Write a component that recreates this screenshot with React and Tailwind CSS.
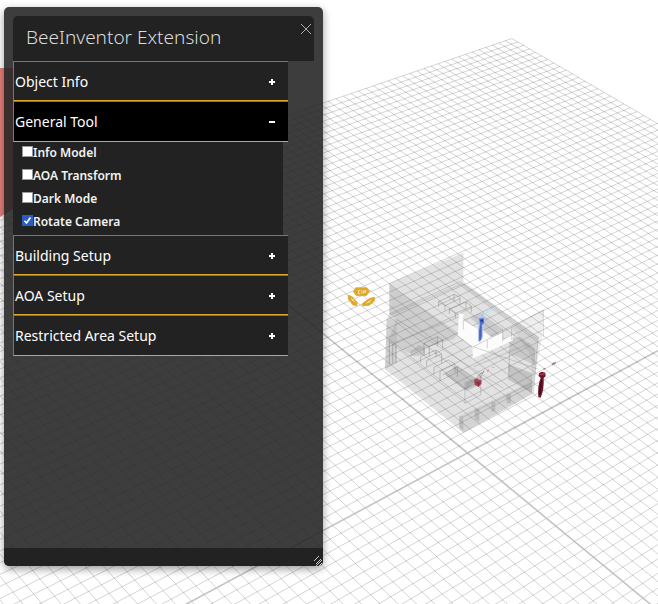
import { useState } from "react";

const CELLS = 50;
const U = { k: 0.23746, x: 2515, y: -647 };
const V = { k: 0.23254, x: -1343, y: -1044 };
const ORIGIN = { x: 467.5, y: 453 };

// Perspective projection of a ground point, u and v in -1..1
function project(u, v) {
  const a = u * U.k;
  const b = v * V.k;
  const w = 1 + a + b;
  return [
    ((ORIGIN.x + a * U.x + b * V.x) / w).toFixed(2),
    ((ORIGIN.y + a * U.y + b * V.y) / w).toFixed(2),
  ];
}

function segment(u1, v1, u2, v2) {
  return `M${project(u1, v1).join(" ")}L${project(u2, v2).join(" ")}`;
}

function Ground() {
  const lines = [];
  for (let i = -CELLS; i <= CELLS; i += 1) {
    const t = i / CELLS;
    const axis = i === 0;
    const style = { stroke: axis ? "#b8b8b8" : "#000", strokeOpacity: axis ? 0.85 : 0.17, strokeWidth: axis ? 1.6 : 1 };
    lines.push(<path key={`u${i}`} d={segment(t, -1, t, 1)} {...style} />);
    lines.push(<path key={`v${i}`} d={segment(-1, t, 1, t)} {...style} />);
  }
  return <g fill="none">{lines}</g>;
}

function Building() {
  return (
    <g transform="translate(330 240) scale(0.33333)">
      <g fill="#555">
        <path fillOpacity=".17" d="M178 130L400 38V125L625 292L608 462L400 578L165 388L170 238L178 222Z" />
        <path fillOpacity=".15" d="M178 132L385 280L370 298L322 312L200 240L178 222Z" />
        <path fillOpacity=".14" d="M200 238L322 312L240 340L172 305Z" />
        <path fillOpacity=".12" d="M170 238L200 238V370L165 388Z" />
        <path fillOpacity=".1" d="M545 262L640 210L636 290L605 462V350Z" />
        <path fillOpacity=".18" d="M538 296L570 290L615 325V375L538 340Z" />
        <path fillOpacity=".22" d="M534 372L606 400V460L534 418Z" />
        <path fillOpacity=".1" d="M388 528L605 424V462L400 578L388 568Z" />
        <path fillOpacity=".17" d="M420 232L450 218L520 268L485 292Z" />
        <path fillOpacity=".2" d="M345 402L380 378L440 420L405 450Z" />
        <path fillOpacity=".24" d="M408 426L455 405V432L408 452Z" />
        <path fillOpacity=".18" d="M240 335L268 315L285 325V345L242 349Z" />
      </g>
      <path fill="#fff" fillOpacity=".9" d="M386 220L400 222V240L485 292L518 278V300L548 285V302L428 356V320L384 286Z" />
      <g fill="none" stroke="#777" strokeOpacity=".3" strokeWidth="3">
        <path d="M178 222L390 125L625 292L610 462M545 262L640 210V290M545 262L430 320M430 320L625 388M200 238L520 445M178 305L405 488M545 262V300M538 330V395" />
        <path strokeWidth="5" strokeOpacity=".2" d="M180 226L395 132L622 298M430 380L600 310M190 310L388 230M400 530L608 428" />
        <path d="M405 425V490L452 465V405M472 300V325M518 268V305M400 240V268" />
      </g>
      <g fill="none" stroke="#555" strokeOpacity=".3" strokeWidth="3">
        <path d="M326 185L372 163L390 172V190M326 185L345 197L390 176M326 185V200M345 197V212M372 163V182" />
        <path d="M358 208L408 186L424 198V218M358 208L376 220L424 200M358 208V222M376 220V234M408 186V205" />
        <path d="M282 310L322 290L338 300V325M282 310V340M298 320V350M322 290V318M282 310L298 320L338 300" />
        <path d="M272 350L318 330L335 342V370M272 350V368M290 362V380M290 362L335 342M318 330V352" />
        <path d="M312 382L355 360L375 372V398M312 382V402M330 394V422M330 394L375 372M338 404L382 380V410" />
        <path d="M178 306V372M188 312V370M198 318V368M345 402L408 450M380 378L450 425" />
      </g>
      <g fill="#666" fillOpacity=".22">
        <path d="M388 528H400V572L388 562ZM434 506H448V545L434 538ZM484 486H496V514H484ZM530 462H543V490H530Z" />
      </g>
      {/* blue figure */}
      <g>
        <path d="M456 224L472 215L493 206" stroke="#b9e2f7" strokeWidth="6" strokeDasharray="10 3" fill="none" />
        <path d="M458 220V234" stroke="#9fcdf2" strokeWidth="6" />
        <path d="M446 234L463 233L464 249L457 255V288Q455 306 446 304Q444 270 448 253Z" fill="#5471c9" stroke="#b2c5f3" strokeWidth="3" />
        <path d="M452 258L451 298" stroke="#4b63b5" strokeWidth="4" />
        <path d="M451 242H459" stroke="#263d98" strokeWidth="6" />
      </g>
      {/* red figures */}
      <g fill="#aa4552">
        <path d="M432 419L440 415L454 422V431L446 441L434 434Z" />
        <path d="M434 422L445 426L454 422L446 440Z" fill="#873542" />
        <path d="M444 409L456 397M456 403L462 393M471 394L477 390M488 384L491 381" stroke="#b77780" strokeWidth="3" />
      </g>
      <g fill="#6e1427">
        <path d="M627 400L635 395L646 398L647 409L641 414Q643 448 632 473L625 471Q622 438 632 414L626 408Z" />
        <path d="M628 401L645 400L644 406H629Z" fill="#a53448" />
        <path d="M635 419Q630 445 630 463" stroke="#3d0b18" strokeWidth="4" fill="none" />
        <path d="M640 388L646 385M666 375L671 368M672 373L677 366" stroke="#a47c82" strokeWidth="4" />
      </g>
    </g>
  );
}

function Gizmo() {
  return (
    <g transform="translate(330 240) scale(0.33333)" fill="#dfa72c" stroke="#dfa72c" strokeWidth="2">
      <path d="M77 143H110L119 154L109 167H79L70 155Z" />
      <path d="M54 165L67 170L82 188L80 198L68 194L55 178Z" />
      <path d="M134 172L119 175L98 190L97 198L118 196L133 184Z" />
      <path d="M85 151V161M85 151H91M85 161H91M96 151V161M101 160V152H107V157H102M63 175L76 187M66 182L72 178M109 190L124 180M114 185L121 187" fill="none" stroke="#f6dfa6" strokeWidth="3" />
    </g>
  );
}

function Scene() {
  return (
    <svg className="absolute inset-0 h-full w-full" viewBox="0 0 658 604" preserveAspectRatio="xMinYMin slice" aria-hidden="true">
      <Ground />
      <path d="M0 68H40V193L0 217Z" fill="#e57f7b" />
      <Building />
      <Gizmo />
    </svg>
  );
}

function RowButton({ title, open, onClick }) {
  return (
    <button
      type="button"
      onClick={onClick}
      aria-expanded={open}
      className={`flex w-full shrink-0 items-center justify-between border-t border-b border-l border-t-[#767676] border-b-[#dba62e] border-l-[#767676] pt-px pr-[13px] pl-px text-left text-sm text-white last:h-[41px] ${open ? "h-[41px] bg-black" : "h-10 bg-[#222]"}`}
    >
      <span>{title}</span>
      <svg className="h-[6px] w-[6px]" viewBox="0 0 6 6" stroke="#fff" strokeWidth="2" aria-hidden="true">
        <path d={open ? "M0 3H6" : "M0 3H6M3 0V6"} />
      </svg>
    </button>
  );
}

function Option({ label, checked, onChange }) {
  return (
    <label className="flex h-[23px] items-start text-xs leading-[21px] font-semibold text-[#f2f2f2]">
      <input
        type="checkbox"
        checked={checked}
        onChange={onChange}
        className="peer mt-1 h-[11px] w-[11px] appearance-none border border-[#999] bg-white checked:border-[#2b5cc4] checked:bg-[#2b5cc4]"
      />
      <svg className="mt-1 -ml-[11px] hidden h-[11px] w-[11px] peer-checked:block" viewBox="0 0 11 11" fill="none" stroke="#fff" strokeWidth="1.7" aria-hidden="true">
        <path d="M2.5 5.8L4.5 8L8.5 2.5" />
      </svg>
      <span>{label}</span>
    </label>
  );
}

const SECTIONS = ["Object Info", "General Tool", "Building Setup", "AOA Setup", "Restricted Area Setup"];
const OPTIONS = ["Info Model", "AOA Transform", "Dark Mode", "Rotate Camera"];

export default function App() {
  const [open, setOpen] = useState("General Tool");
  const [checked, setChecked] = useState({ "Rotate Camera": true });

  return (
    <main className="relative flex min-h-screen items-start overflow-hidden bg-white px-1 pt-[7px] font-['Noto_Sans',sans-serif]">
      <Scene />
      <section className="relative flex min-h-[559px] w-[319px] flex-col rounded-[5px] bg-[#222222]/88 shadow-[0_3px_9px_rgba(0,0,0,0.4)]">
        <div className="flex grow flex-col px-[9px] pt-[9px]">
          <header className="flex h-[45px] items-start justify-between rounded-t-[5px] bg-[#222] pl-[13px]">
            <h1 className="self-center pb-[3px] text-[19px] leading-6 font-light text-[#dcdcdc]">BeeInventor Extension</h1>
            <button type="button" aria-label="Close" className="mt-2 mr-[3px]">
              <svg className="h-[10px] w-[10px]" viewBox="0 0 10 10" stroke="#a5abb2" strokeWidth="1" aria-hidden="true">
                <path d="M0 0L10 10M10 0L0 10" />
              </svg>
            </button>
          </header>
          <div className="flex w-[275px] flex-col">
            {SECTIONS.map((title) => [
              <RowButton key={title} title={title} open={open === title} onClick={() => setOpen(open === title ? "" : title)} />,
              title === "General Tool" && open === title && (
                <div key="options" className="mr-[5px] bg-[#222] pb-px pl-[9px]">
                  {OPTIONS.map((label) => (
                    <Option
                      key={label}
                      label={label}
                      checked={Boolean(checked[label])}
                      onChange={(event) => setChecked({ ...checked, [label]: event.target.checked })}
                    />
                  ))}
                </div>
              ),
            ])}
          </div>
        </div>
        <footer className="flex h-[18px] items-end justify-end rounded-b-[5px] bg-[#222]">
          <svg className="h-[11px] w-[10px]" viewBox="0 0 10 11" fill="none" stroke="#c4c9ce" strokeWidth="1" aria-hidden="true">
            <path d="M1 6L6 1M3 9L8 4M3 11L9 5M6 11L9 8" />
          </svg>
        </footer>
      </section>
    </main>
  );
}
